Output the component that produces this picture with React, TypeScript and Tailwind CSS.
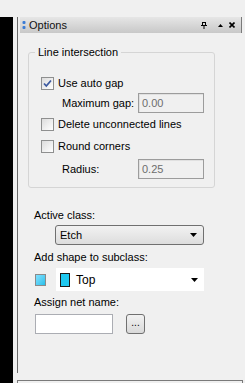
import React from "react";

const font = { fontFamily: '"Liberation Sans", Arial, sans-serif' };

function CheckBox({ checked }: { checked?: boolean }) {
  return (
    <div className="relative h-[13px] w-[13px] shrink-0 border border-[#8e8f8f] bg-gradient-to-br from-[#dcdcdc] to-[#ffffff]">
      {checked && (
        <svg
          width="11"
          height="11"
          viewBox="0 0 11 11"
          className="absolute left-0 top-0"
        >
          <path
            d="M2 5.5 L4.3 8 L9 2.5"
            fill="none"
            stroke="#3c5aa0"
            strokeWidth="1.8"
          />
        </svg>
      )}
    </div>
  );
}

function DisabledInput({ value }: { value: string }) {
  return (
    <div className="flex h-[20px] w-[66px] items-center border border-[#9c9c9c] bg-[#f0f0f0] pl-[3px] text-[11px] text-[#6d6d6d] shadow-[inset_1px_1px_0_#e0e0e0]">
      {value}
    </div>
  );
}

function DownArrow() {
  return (
    <svg width="7" height="4" viewBox="0 0 7 4">
      <path d="M0 0 H7 L3.5 4 Z" fill="#000" />
    </svg>
  );
}

export default function App() {
  return (
    <div
      className="flex h-[383px] w-[245px] flex-col overflow-hidden bg-[#f0f0f0] text-[11px] text-black"
      style={font}
    >
      <div className="h-[17px] shrink-0" />
      <div className="flex flex-1">
        <div className="w-[13px] bg-black" />
        <div className="flex flex-1 flex-col pl-[4px]">
          <div className="flex h-[356px] flex-col border-l border-[#6b6b6b] pl-[2px]">
            {/* title bar */}
            <div className="flex h-[16px] w-[222px] items-center border-r border-[#7a7a7a] bg-gradient-to-b from-[#e6e6e6] to-[#c8c8c8]">
              <svg width="4" height="9" viewBox="0 0 4 9" className="ml-[2px]">
                <rect x="0.5" y="0" width="3" height="3" rx="1" fill="#3a7bd5" />
                <rect x="0.5" y="5" width="3" height="3" rx="1" fill="#3a7bd5" />
              </svg>
              <span className="ml-[3px] leading-[16px] text-[#111]">Options</span>
              <div className="flex-1" />
              <svg width="6" height="7" viewBox="0 0 6 7">
                <path d="M1.5 0 V3.5 M4.5 0 V3.5 M0 3.5 H6 M3 3.5 V7" stroke="#000" strokeWidth="1" fill="none" />
                <path d="M1.5 0.5 H4.5" stroke="#000" strokeWidth="1" />
              </svg>
              <svg width="5" height="3" viewBox="0 0 5 3" className="ml-[11px]">
                <path d="M0 3 H5 L2.5 0 Z" fill="#000" />
              </svg>
              <svg width="6" height="6" viewBox="0 0 6 6" className="ml-[6px] mr-[6px]">
                <path d="M0.5 0.5 L5.5 5.5 M5.5 0.5 L0.5 5.5" stroke="#000" strokeWidth="1.6" />
              </svg>
            </div>

            {/* group box */}
            <fieldset className="ml-[8px] mt-[13px] w-[187px] rounded-[3px] border border-[#d5d5d5] pb-[8px] pt-[14px]">
              <legend className="ml-[6px] px-[3px] leading-[13px]">
                Line intersection
              </legend>
              <div className="flex h-[20px] items-center pl-[12px]">
                <CheckBox checked />
                <span className="ml-[4px]">Use auto gap</span>
              </div>
              <div className="flex h-[20px] items-center pl-[33px]">
                <span className="w-[76px]">Maximum gap:</span>
                <DisabledInput value="0.00" />
              </div>
              <div className="flex h-[22px] items-center pl-[12px]">
                <CheckBox />
                <span className="ml-[4px]">Delete unconnected lines</span>
              </div>
              <div className="flex h-[22px] items-center pl-[12px]">
                <CheckBox />
                <span className="ml-[4px]">Round corners</span>
              </div>
              <div className="mt-[2px] flex h-[20px] items-center pl-[33px]">
                <span className="w-[76px]">Radius:</span>
                <DisabledInput value="0.25" />
              </div>
            </fieldset>

            <div className="ml-[14px] mt-[20px] leading-[14px]">Active class:</div>
            <div className="ml-[35px] mt-[3px] flex h-[20px] w-[149px] items-center justify-between rounded-[3px] border border-[#707070] bg-gradient-to-b from-[#f2f2f2] to-[#dddddd] pl-[4px] pr-[6px]">
              <span>Etch</span>
              <DownArrow />
            </div>
            <div className="ml-[14px] mt-[5px] leading-[14px]">
              Add shape to subclass:
            </div>
            <div className="ml-[15px] mt-[4px] flex h-[23px] items-center">
              <div className="h-[12px] w-[11px] border border-[#8a8a8a] bg-gradient-to-br from-[#7fe0ff] to-[#1ec0ea]" />
              <div className="ml-[10px] flex h-[23px] w-[148px] items-center bg-white pl-[4px] pr-[6px]">
                <div className="h-[14px] w-[10px] border border-[#1a1a1a] bg-[#1ec8f0]" />
                <span className="ml-[6px] text-[12px]">Top</span>
                <div className="flex-1" />
                <DownArrow />
              </div>
            </div>
            <div className="ml-[14px] mt-[4px] leading-[14px]">
              Assign net name:
            </div>
            <div className="ml-[15px] mt-[5px] flex items-center">
              <div className="h-[20px] w-[78px] border border-[#abadb3] bg-white" />
              <div className="ml-[13px] flex h-[20px] w-[19px] items-center justify-center rounded-[3px] border border-[#707070] bg-gradient-to-b from-[#f2f2f2] to-[#d9d9d9] pb-[3px] text-[10px] leading-none">
                ...
              </div>
            </div>
          </div>
          <div className="mt-[7px] mr-[2px] h-[3px] border-x border-t border-[#7a7a7a]" />
        </div>
      </div>
    </div>
  );
}
